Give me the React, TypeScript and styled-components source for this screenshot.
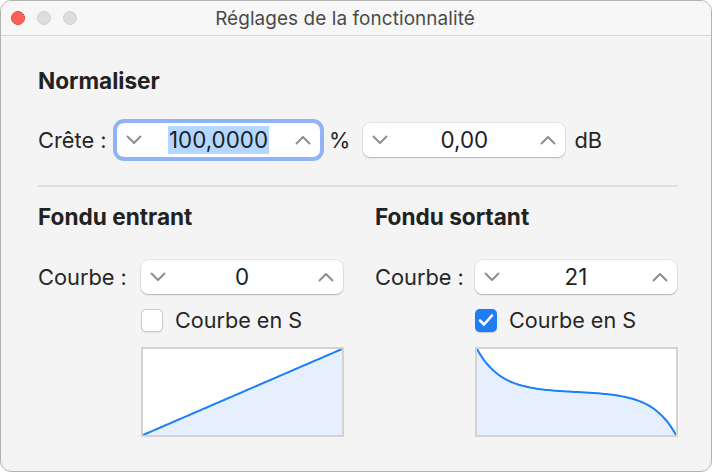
import React from "react";
import styled, { createGlobalStyle } from "styled-components";

const GlobalStyle = createGlobalStyle`
  html, body {
    margin: 0;
    padding: 0;
    background: #ffffff;
  }
  body {
    font-family: Inter, "Noto Sans", "Liberation Sans", sans-serif;
    color: #242424;
    -webkit-font-smoothing: antialiased;
  }
`;

const Window = styled.div`
  box-sizing: border-box;
  width: 712px;
  height: 472px;
  border: 1px solid #b3b3b3;
  border-radius: 11px;
  background: #f4f4f4;
  overflow: hidden;
  display: flex;
  flex-direction: column;
`;

const TitleBar = styled.div`
  position: relative;
  height: 34px;
  flex: none;
  background: #f7f7f7;
  border-bottom: 1px solid #d3d3d3;
  display: flex;
  align-items: center;
  justify-content: center;
  padding-right: 22px;
`;

const Lights = styled.div`
  position: absolute;
  left: 10px;
  top: 10px;
  display: flex;
  gap: 12px;
`;

const Light = styled.span<{ $color: string; $edge: string }>`
  width: 14px;
  height: 14px;
  border-radius: 50%;
  box-sizing: border-box;
  background: ${(p) => p.$color};
  border: 1px solid ${(p) => p.$edge};
`;

const Title = styled.div`
  font-size: 18.9px;
  color: #4a4a4a;
  letter-spacing: 0.1px;
`;

const Content = styled.div`
  padding: 33px 35px 0 37px;
  display: flex;
  flex-direction: column;
`;

const Heading = styled.div`
  font-size: 22.6px;
  font-weight: 700;
  line-height: 24px;
  color: #222;
`;

const Row = styled.div<{ $top: number }>`
  display: flex;
  align-items: center;
  height: 34px;
  margin-top: ${(p) => p.$top}px;
`;

const Label = styled.span<{ $width: number }>`
  flex: none;
  width: ${(p) => p.$width}px;
  font-size: 21.8px;
  line-height: 24px;
  color: #262626;
`;

const Unit = styled.span<{ $left: number; $right: number }>`
  font-size: 21.8px;
  line-height: 24px;
  color: #262626;
  margin-left: ${(p) => p.$left}px;
  margin-right: ${(p) => p.$right}px;
`;

const StepperBox = styled.div<{ $width: number; $focused?: boolean }>`
  box-sizing: border-box;
  width: ${(p) => p.$width}px;
  height: 34px;
  flex: none;
  background: #ffffff;
  border-radius: 7px;
  display: flex;
  align-items: center;
  padding: 0 9px 0 9px;
  box-shadow: ${(p) =>
    p.$focused
      ? "0 0 0 4px #8fb3f4"
      : "0 0 0 0.5px rgba(0,0,0,0.12), 0 1px 1.5px rgba(0,0,0,0.22)"};
`;

const Value = styled.div`
  flex: 1;
  display: flex;
  justify-content: center;
  font-size: 22.4px;
  line-height: 28px;
  color: #1f1f1f;
`;

const Selected = styled.span`
  background: #b3d7ff;
  padding: 0 1px;
`;

const Chevron = ({ up }: { up?: boolean }) => (
  <svg width="16" height="10" viewBox="0 0 16 10" fill="none">
    <path
      d={up ? "M1.5 8.5 L8 2 L14.5 8.5" : "M1.5 1.5 L8 8 L14.5 1.5"}
      stroke="#8c8c8c"
      strokeWidth="1.9"
      strokeLinecap="round"
      strokeLinejoin="round"
    />
  </svg>
);

const Stepper = ({
  value,
  width,
  focused,
}: {
  value: string;
  width: number;
  focused?: boolean;
}) => (
  <StepperBox $width={width} $focused={focused}>
    <Chevron />
    <Value>{focused ? <Selected>{value}</Selected> : value}</Value>
    <Chevron up />
  </StepperBox>
);

const Divider = styled.div`
  height: 2px;
  background: #dfdfdf;
  margin-top: 28px;
  width: 640px;
`;

const Columns = styled.div`
  display: grid;
  grid-template-columns: 337px 1fr;
  margin-top: 18px;
`;

const Column = styled.div`
  display: flex;
  flex-direction: column;
`;

const CheckRow = styled.label<{ $indent: number }>`
  display: flex;
  align-items: center;
  gap: 12px;
  margin-top: 14px;
  margin-left: ${(p) => p.$indent}px;
  height: 24px;
  font-size: 21.6px;
  color: #262626;
`;

const Box = styled.span<{ $checked?: boolean }>`
  box-sizing: border-box;
  width: 22px;
  height: 23px;
  border-radius: 5px;
  display: flex;
  align-items: center;
  justify-content: center;
  background: ${(p) => (p.$checked ? "#1d7cf6" : "#ffffff")};
  border: ${(p) => (p.$checked ? "none" : "1px solid #cacaca")};
  box-shadow: ${(p) =>
    p.$checked ? "0 0.5px 1px rgba(0,0,0,0.2)" : "0 0.5px 1px rgba(0,0,0,0.08)"};
`;

const Graph = styled.svg<{ $indent: number }>`
  display: block;
  margin-top: 15px;
  margin-left: ${(p) => p.$indent}px;
  box-sizing: border-box;
  border: 2px solid #d3d3d3;
  background: #ffffff;
`;

const GW = 199;
const GH = 86;

// Fade shape: a straight ramp, or a symmetric sinh-based S profile
const curvePoints = (s: boolean, falling: boolean) => {
  const pts: [number, number][] = [];
  const a = 4.2;
  for (let i = 0; i <= 100; i++) {
    const t = i / 100;
    let v: number;
    if (s) {
      const u = 2 * t - 1;
      v = 0.5 + (0.5 * Math.sinh(a * u)) / Math.sinh(a);
    } else {
      v = t;
    }
    const level = falling ? 1 - v : v;
    pts.push([t * GW, GH - level * GH]);
  }
  return pts;
};

const FadeGraph = ({
  s,
  falling,
  indent,
}: {
  s: boolean;
  falling: boolean;
  indent: number;
}) => {
  const pts = curvePoints(s, falling);
  const line = pts.map((p, i) => `${i ? "L" : "M"}${p[0].toFixed(2)} ${p[1].toFixed(2)}`).join(" ");
  const area = `${line} L${GW} ${GH} L0 ${GH} Z`;
  return (
    <Graph $indent={indent} width={GW + 4} height={GH + 4} viewBox={`0 0 ${GW} ${GH}`}>
      <path d={area} fill="#e6effd" />
      <path d={line} fill="none" stroke="#1b80f6" strokeWidth="2" />
    </Graph>
  );
};

const Check = () => (
  <svg width="16" height="14" viewBox="0 0 16 14" fill="none">
    <path
      d="M2 7.5 L6 11.5 L14 2.5"
      stroke="#ffffff"
      strokeWidth="2.6"
      strokeLinecap="round"
      strokeLinejoin="round"
    />
  </svg>
);

const FadeColumn = ({
  title,
  value,
  labelWidth,
  sCurve,
  falling,
}: {
  title: string;
  value: string;
  labelWidth: number;
  sCurve: boolean;
  falling: boolean;
}) => (
  <Column>
    <Heading>{title}</Heading>
    <Row $top={31}>
      <Label $width={labelWidth}>Courbe :</Label>
      <Stepper value={value} width={202} />
    </Row>
    <CheckRow $indent={labelWidth}>
      <Box $checked={sCurve}>{sCurve && <Check />}</Box>
      Courbe en S
    </CheckRow>
    <FadeGraph s={sCurve} falling={falling} indent={labelWidth} />
  </Column>
);

export default function App() {
  return (
    <>
      <GlobalStyle />
      <Window>
        <TitleBar>
          <Lights>
            <Light $color="#fe5f57" $edge="#e2463f" />
            <Light $color="#dddddd" $edge="#cfcfcf" />
            <Light $color="#dddddd" $edge="#cfcfcf" />
          </Lights>
          <Title>Réglages de la fonctionnalité</Title>
        </TitleBar>
        <Content>
          <Heading>Normaliser</Heading>
          <Row $top={30}>
            <Label $width={79}>Crête :</Label>
            <Stepper value="100,0000" width={203} focused />
            <Unit $left={9} $right={13}>%</Unit>
            <Stepper value="0,00" width={202} />
            <Unit $left={9} $right={0}>dB</Unit>
          </Row>
          <Divider />
          <Columns>
            <FadeColumn title="Fondu entrant" value="0" labelWidth={103} sCurve={false} falling={false} />
            <FadeColumn title="Fondu sortant" value="21" labelWidth={100} sCurve falling />
          </Columns>
        </Content>
      </Window>
    </>
  );
}
